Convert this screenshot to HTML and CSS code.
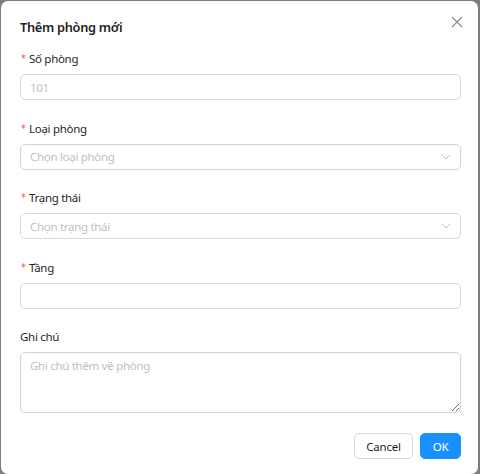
FILE: index.html
```html
<!DOCTYPE html>
<html lang="vi">
<head>
<meta charset="utf-8">
<title>Thêm phòng mới</title>
<link rel="stylesheet" href="styles.css">
</head>
<body>
<div class="modal">
  <div class="modal-header">
    <div class="modal-title">Thêm phòng mới</div>
    <button class="close" aria-label="Close">
      <svg width="12" height="12" viewBox="0 0 12 12"><path d="M1 1 L11 11 M11 1 L1 11" stroke="#8c8c8c" stroke-width="1.1" fill="none"/></svg>
    </button>
  </div>
  <form class="form">
    <div class="item">
      <label class="label"><span class="req">*</span>Số phòng</label>
      <input class="input" type="text" placeholder="101">
    </div>
    <div class="item">
      <label class="label"><span class="req">*</span>Loại phòng</label>
      <div class="select blueish">
        <span class="ph">Chọn loại phòng</span>
        <svg class="arrow" width="10" height="6" viewBox="0 0 10 6"><path d="M1 0.8 L5 5 L9 0.8" stroke="#bfbfbf" stroke-width="1" fill="none"/></svg>
      </div>
    </div>
    <div class="item">
      <label class="label"><span class="req">*</span>Trạng thái</label>
      <div class="select">
        <span class="ph">Chọn trạng thái</span>
        <svg class="arrow" width="10" height="6" viewBox="0 0 10 6"><path d="M1 0.8 L5 5 L9 0.8" stroke="#bfbfbf" stroke-width="1" fill="none"/></svg>
      </div>
    </div>
    <div class="item">
      <label class="label"><span class="req">*</span>Tầng</label>
      <input class="input" type="text">
    </div>
    <div class="item last">
      <label class="label">Ghi chú</label>
      <textarea class="textarea" placeholder="Ghi chú thêm về phòng"></textarea>
    </div>
  </form>
  <div class="footer">
    <button class="btn">Cancel</button>
    <button class="btn primary">OK</button>
  </div>
</div>
</body>
</html>
```
FILE: styles.css
```css
html, body {
  margin: 0;
  padding: 0;
  height: 100%;
}
body {
  background: #7d7d7d;
  font-family: "Noto Sans", "Open Sans", sans-serif;
  color: #1f1f1f;
  overflow: hidden;
}
.modal {
  margin: 1px 2px 0 1px;
  height: 473px;
  background: #fff;
  border-radius: 7px;
  padding: 0 17px 0 19px;
  box-sizing: border-box;
  display: flex;
  flex-direction: column;
}
.modal-header {
  display: flex;
  align-items: center;
  justify-content: space-between;
  height: 22px;
  margin-top: 15px;
}
.modal-title {
  font-size: 12.8px;
  font-weight: 600;
  line-height: 22px;
  letter-spacing: -0.3px;
}
.close {
  border: 0;
  background: none;
  padding: 0;
  width: 12px;
  height: 12px;
  display: flex;
  margin-right: -2px;
  margin-top: -10px;
}
.form {
  margin-top: 12px;
  display: flex;
  flex-direction: column;
}
.item {
  display: flex;
  flex-direction: column;
  margin-bottom: 19.5px;
}
.item.last {
  margin-bottom: 20px;
}
.label {
  font-size: 11.5px;
  letter-spacing: -0.3px;
  line-height: 18px;
  padding-bottom: 6px;
  display: flex;
  align-items: center;
}
.req {
  color: #ff4d4f;
  margin-right: 3px;
  margin-left: 1px;
  font-family: "DejaVu Sans", sans-serif;
  font-size: 10px;
  letter-spacing: 0;
}
.input, .select, .textarea {
  box-sizing: border-box;
  width: 100%;
  border: 1px solid #d9d9d9;
  border-radius: 5px;
  background: #fff;
  font-family: inherit;
  font-size: 11.5px;
  letter-spacing: -0.3px;
  color: #1f1f1f;
  outline: none;
}
.input {
  height: 26px;
  padding: 0 9px;
}
.input::placeholder, .textarea::placeholder {
  color: #bfbfbf;
}
.select {
  height: 26px;
  padding: 0 9px;
  display: flex;
  align-items: center;
  justify-content: space-between;
}
.select.blueish, .textarea {
  border-color: #c8d5e1;
}
.ph {
  color: #bfbfbf;
}
.textarea {
  height: 61px;
  padding: 4px 9px;
  resize: vertical;
  line-height: 18px;
  display: block;
}
.footer {
  display: flex;
  justify-content: flex-end;
  gap: 7px;
}
.btn {
  height: 26px;
  border-radius: 5px;
  border: 1px solid #d9d9d9;
  background: #fff;
  font-family: inherit;
  font-size: 11.5px;
  letter-spacing: -0.2px;
  color: #1f1f1f;
  padding: 0;
  width: 59px;
}
.btn.primary {
  background: #1890ff;
  border-color: #1890ff;
  color: #fff;
  width: 41px;
}
```
